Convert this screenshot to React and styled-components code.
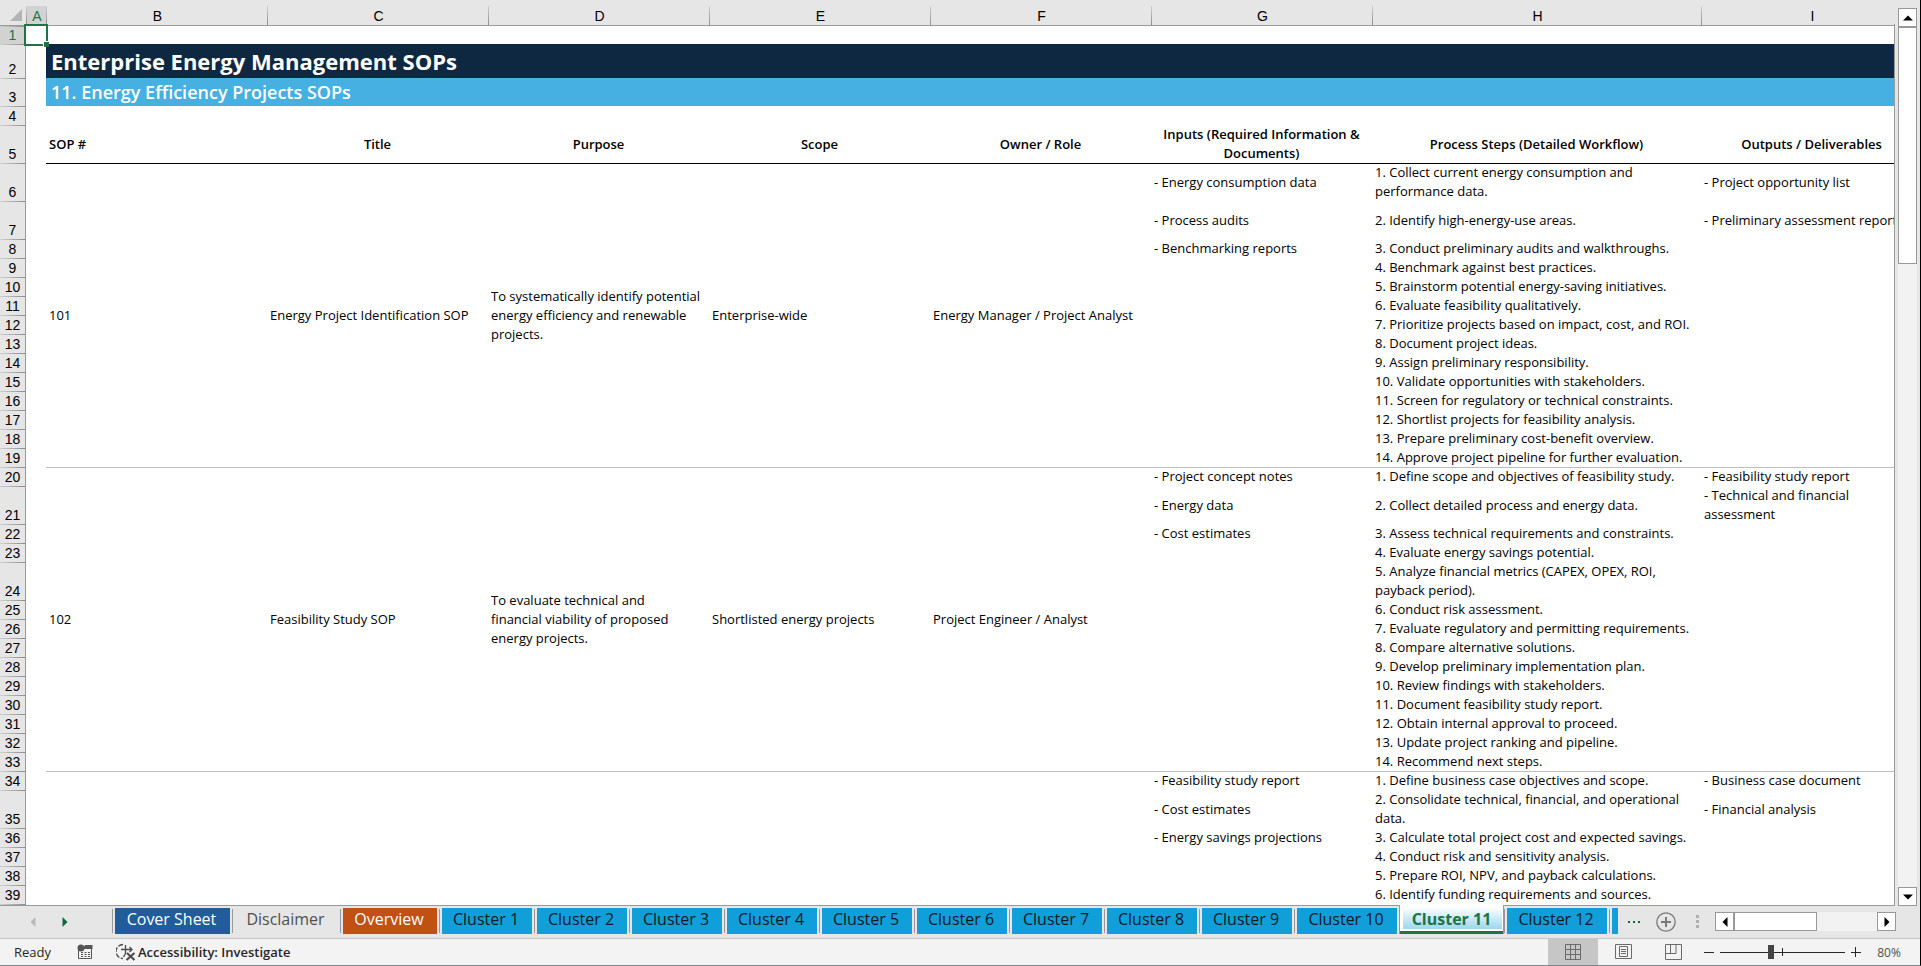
import React from 'react';
import styled, { createGlobalStyle, css } from 'styled-components';

const GlobalStyle = createGlobalStyle`
  *, *::before, *::after { box-sizing: border-box; }
  body { margin: 0; background: #e6e6e6; }
  button { border: 0; padding: 0; margin: 0; background: none; font: inherit; color: inherit; }
  svg { display: block; }
`;

const line = '#999999';
const chrome = '#e6e6e6';
const green = '#217346';
const narrow = "'Liberation Sans Narrow', 'Liberation Sans', sans-serif";
const sans = "'Open Sans', 'Noto Sans', sans-serif";

const AppWindow = styled.div`
  display: flex;
  flex-direction: column;
  height: 100vh;
  overflow: hidden;
  background: ${chrome};
  border-right: 1px solid #000;
  border-bottom: 1px solid #7d8590;
  font-family: ${sans};
  font-size: 13px;
  color: #000;
`;

const Workspace = styled.div`
  flex: 1;
  min-height: 0;
  display: flex;
`;

const SheetFrame = styled.main`
  flex: 1;
  min-width: 0;
  display: flex;
  border-bottom: 1px solid ${line};
`;

const SheetView = styled.div`
  flex: 1;
  min-width: 0;
  overflow: hidden;
  background: linear-gradient(${chrome} 25px, #fff 25px);
  border-right: 1px solid;
  border-image: linear-gradient(${chrome} 25px, ${line} 25px) 1;
`;

const Sheet = styled.table`
  table-layout: fixed;
  width: 0;
  border-collapse: separate;
  border-spacing: 0;
  line-height: 19px;
`;

const Col = styled.col`
  width: ${(p) => p.$w}px;
`;

const Row = styled.tr`
  height: ${(p) => p.$h}px;
`;

const Corner = styled.td`
  height: 26px;
  padding: 4px 0 0 10px;
  background: ${chrome};
  border-bottom: 1px solid ${line};
`;

const ColumnLetter = styled.th`
  height: 26px;
  padding: 8px 0 0 2px;
  font: 400 14px/17px ${narrow};
  color: ${(p) => (p.$selected ? green : '#000')};
  border-bottom: 1px solid ${line};
  background:
    linear-gradient(#d0d0d0, #8c8c8c) 0 6px / 1px 19px no-repeat,
    linear-gradient(${(p) => (p.$selected ? '#d2d2d2' : chrome)}, ${(p) => (p.$selected ? '#d2d2d2' : chrome)}) 0 6px / 100% 19px no-repeat,
    ${chrome};
`;

const RowNumber = styled.th`
  padding: 0;
  vertical-align: bottom;
  text-align: center;
  font: 400 14px/18px ${narrow};
  color: ${(p) => (p.$selected ? green : '#000')};
  border-right: 1px solid ${line};
  background:
    linear-gradient(to right, #d0d0d0, #8c8c8c) 0 0 / 100% 1px no-repeat,
    ${(p) => (p.$selected ? '#d2d2d2' : chrome)};
`;

const Cell = styled.td`
  padding: 0 3px;
  vertical-align: middle;
  white-space: pre;
  ${(p) => p.$rule && css`box-shadow: inset 0 1px ${p.$rule};`}
`;

const HeadCell = styled.th`
  padding: 0 3px;
  white-space: pre;
  font-weight: 600;
  text-align: ${(p) => p.$align || 'center'};
`;

const Banner = styled.td`
  padding: 0 5px;
  background: ${(p) => p.$bg};
  color: #fff;
  font-size: ${(p) => p.$size}px;
  font-weight: ${(p) => p.$weight};
  line-height: 26px;
`;

const ActiveCell = styled.td`
  position: relative;
  padding: 0;
`;

const Selection = styled.span`
  position: absolute;
  inset: -2px;
  z-index: 1;
  border: 2px solid ${green};

  &::after {
    content: '';
    position: absolute;
    right: -3px;
    bottom: -3px;
    width: 6px;
    height: 6px;
    background: ${green};
    border: solid #fff;
    border-width: 1px 0 0 1px;
  }
`;

const VScroll = styled.div`
  flex: 0 0 25px;
  display: flex;
  flex-direction: column;
  padding: 8px 3px 0;
`;

const ScrollButton = styled.button`
  flex: 0 0 19px;
  height: 19px;
  display: flex;
  align-items: center;
  justify-content: center;
  background: #fff;
  border: 1px solid ${line};
`;

const Track = styled.div`
  flex: 1;
  display: flex;
  flex-direction: ${(p) => (p.$vertical ? 'column' : 'row')};
  background: #f2f2f2;
`;

const Thumb = styled.div`
  flex: 0 0 ${(p) => p.$share};
  background: #fff;
  border: 1px solid ${line};
`;

const TabBar = styled.nav`
  flex: 0 0 32px;
  display: flex;
  align-items: flex-start;
  border-bottom: 1px solid #c6c6c6;
  font-size: 16px;
`;

const TabArrows = styled.div`
  flex: 0 0 112px;
  display: flex;
  gap: 24px;
  padding: 11px 0 0 28px;
`;

const ArrowButton = styled.button`
  width: 8px;
  height: 10px;
  color: ${(p) => p.$color};
`;

const TabSlot = styled.div`
  flex: none;
  padding: 2px 2px 0;
  background: linear-gradient(${line}, ${line}) 0 3px / 1px 24px no-repeat;
  border-left: 1px solid transparent;
  background-origin: border-box;
`;

const Tab = styled.button`
  display: block;
  width: ${(p) => p.$w}px;
  height: 26px;
  padding: 0 2px 4px 0;
  line-height: 22px;
  white-space: nowrap;
  background: ${(p) => p.$bg};
  color: ${(p) => p.$color};
`;

const ActiveTab = styled.button`
  position: relative;
  flex: none;
  width: 105px;
  height: 29px;
  margin-top: -1px;
  padding-bottom: 1px;
  line-height: 22px;
  font-weight: 700;
  color: ${green};
  background: linear-gradient(#fff 2px, #9bd7ee) 3px 0 / 99px 24px no-repeat, #fff;
  border: solid ${line};
  border-width: 0 1px;
  box-shadow: inset 0 -3px ${green};
`;

const More = styled.button`
  flex: none;
  width: 14px;
  margin-left: 8px;
  height: 32px;
  color: #0b6b3a;
`;

const AddSheet = styled.button`
  flex: none;
  margin: 6px 0 0 14px;
`;

const Grip = styled.div`
  flex: none;
  margin: 9px 16px 0 20px;
`;

const HScroll = styled.div`
  flex: 1;
  display: flex;
  height: 19px;
  margin: 6px 24px 0 0;
`;

const StatusBar = styled.footer`
  flex: 0 0 26px;
  display: flex;
  align-items: center;
  padding: 0 18px 0 14px;
  background: #f3f3f3;
  color: #262626;
`;

const StatusButton = styled.button`
  display: flex;
  align-items: center;
  gap: 2px;
  margin-left: ${(p) => p.$gap}px;
  font-weight: 600;
`;

const Spacer = styled.div`
  flex: 1;
`;

const ViewButton = styled.button`
  width: 50px;
  height: 26px;
  display: flex;
  align-items: center;
  justify-content: center;
  background: ${(p) => (p.$on ? '#c6c6c6' : 'transparent')};
`;

const ZoomStep = styled.button`
  width: 10px;
  margin: 0 6px;
`;

const ZoomRange = styled.input`
  appearance: none;
  width: 125px;
  height: 14px;
  margin: 0;
  background:
    linear-gradient(#262626, #262626) 50% 50% / 1px 8px no-repeat,
    linear-gradient(#262626, #262626) 0 50% / 100% 1px no-repeat;

  &::-webkit-slider-thumb {
    appearance: none;
    width: 6px;
    height: 14px;
    background: #444;
  }
`;

const ZoomValue = styled.button`
  width: 26px;
  margin-left: 9px;
  font-size: 12px;
  color: #505050;
`;

const inputs = {
  6: '- Energy consumption data',
  7: '- Process audits',
  8: '- Benchmarking reports',
  20: '- Project concept notes',
  21: '- Energy data',
  22: '- Cost estimates',
  34: '- Feasibility study report',
  35: '- Cost estimates',
  36: '- Energy savings projections',
};

const outputs = {
  6: '- Project opportunity list',
  7: '- Preliminary assessment report',
  20: '- Feasibility study report',
  21: '- Technical and financial\nassessment',
  34: '- Business case document',
  35: '- Financial analysis',
};

const sections = [
  {
    first: 6,
    rule: '#000',
    info: [
      '101',
      'Energy Project Identification SOP',
      'To systematically identify potential\nenergy efficiency and renewable\nprojects.',
      'Enterprise-wide',
      'Energy Manager / Project Analyst',
    ],
    steps: [
      '1. Collect current energy consumption and\nperformance data.',
      '2. Identify high-energy-use areas.',
      '3. Conduct preliminary audits and walkthroughs.',
      '4. Benchmark against best practices.',
      '5. Brainstorm potential energy-saving initiatives.',
      '6. Evaluate feasibility qualitatively.',
      '7. Prioritize projects based on impact, cost, and ROI.',
      '8. Document project ideas.',
      '9. Assign preliminary responsibility.',
      '10. Validate opportunities with stakeholders.',
      '11. Screen for regulatory or technical constraints.',
      '12. Shortlist projects for feasibility analysis.',
      '13. Prepare preliminary cost-benefit overview.',
      '14. Approve project pipeline for further evaluation.',
    ],
  },
  {
    first: 20,
    rule: '#bfbfbf',
    info: [
      '102',
      'Feasibility Study SOP',
      'To evaluate technical and\nfinancial viability of proposed\nenergy projects.',
      'Shortlisted energy projects',
      'Project Engineer / Analyst',
    ],
    steps: [
      '1. Define scope and objectives of feasibility study.',
      '2. Collect detailed process and energy data.',
      '3. Assess technical requirements and constraints.',
      '4. Evaluate energy savings potential.',
      '5. Analyze financial metrics (CAPEX, OPEX, ROI,\npayback period).',
      '6. Conduct risk assessment.',
      '7. Evaluate regulatory and permitting requirements.',
      '8. Compare alternative solutions.',
      '9. Develop preliminary implementation plan.',
      '10. Review findings with stakeholders.',
      '11. Document feasibility study report.',
      '12. Obtain internal approval to proceed.',
      '13. Update project ranking and pipeline.',
      '14. Recommend next steps.',
    ],
  },
  {
    first: 34,
    rule: '#bfbfbf',
    info: ['', '', '', '', ''],
    steps: [
      '1. Define business case objectives and scope.',
      '2. Consolidate technical, financial, and operational\ndata.',
      '3. Calculate total project cost and expected savings.',
      '4. Conduct risk and sensitivity analysis.',
      '5. Prepare ROI, NPV, and payback calculations.',
      '6. Identify funding requirements and sources.',
    ],
  },
];

const tallRows = [6, 7, 21, 24, 35];

const clusterBg = '#119fd9';
const tabsBefore = [
  { name: 'Cover Sheet', w: 115, bg: '#215c9b', color: '#fff' },
  { name: 'Disclaimer', w: 103, bg: 'transparent', color: '#505050' },
  { name: 'Overview', w: 94, bg: '#c05014', color: '#fff' },
  ...[1, 2, 3, 4, 5, 6, 7, 8, 9].map((n) => ({ name: `Cluster ${n}`, w: 90, bg: clusterBg, color: '#0b1a26' })),
  { name: 'Cluster 10', w: 100, bg: clusterBg, color: '#0b1a26' },
];
const tabsAfter = [
  { name: 'Cluster 12', w: 100, bg: clusterBg, color: '#0b1a26' },
  { name: '', w: 6, bg: clusterBg, color: '#0b1a26' },
];

const Triangle = ({ dir, size = 10 }) => {
  const d = {
    up: 'M0 7.5 5 2.5 10 7.5z',
    down: 'M0 2.5 5 7.5 10 2.5z',
    left: 'M7.5 0 2.5 5 7.5 10z',
    right: 'M2.5 0 7.5 5 2.5 10z',
  }[dir];
  return (
    <svg width={size} height={size} viewBox="0 0 10 10" fill="currentColor" aria-hidden="true">
      <path d={d} />
    </svg>
  );
};

const SheetTab = ({ tab }) => (
  <TabSlot>
    <Tab $w={tab.w} $bg={tab.bg} $color={tab.color} aria-label={tab.name || 'Next sheet'}>
      {tab.name}
    </Tab>
  </TabSlot>
);

const Section = ({ section }) =>
  section.steps.map((step, i) => {
    const n = section.first + i;
    const rule = i === 0 ? section.rule : undefined;
    return (
      <Row key={n} $h={tallRows.includes(n) ? 38 : 19}>
        <RowNumber scope="row">{n}</RowNumber>
        <Cell />
        {i === 0 &&
          section.info.map((text, c) => (
            <Cell key={c} rowSpan={section.steps.length} $rule={rule}>
              {text}
            </Cell>
          ))}
        <Cell $rule={rule}>{inputs[n]}</Cell>
        <Cell $rule={rule}>{step}</Cell>
        <Cell $rule={rule}>{outputs[n]}</Cell>
      </Row>
    );
  });

export default function App() {
  return (
    <AppWindow>
      <GlobalStyle />
      <Workspace>
        <SheetFrame>
          <SheetView>
            <Sheet>
              <colgroup>
                {[26, 20, 221, 221, 221, 221, 221, 221, 329, 221].map((w, i) => (
                  <Col key={i} $w={w} />
                ))}
              </colgroup>
              <thead>
                <tr>
                  <Corner>
                    <svg width="12" height="12" aria-hidden="true">
                      <path d="M12 0V12H0z" fill="#b4b4b4" />
                    </svg>
                  </Corner>
                  {'ABCDEFGHI'.split('').map((l) => (
                    <ColumnLetter key={l} scope="col" $selected={l === 'A'}>
                      {l}
                    </ColumnLetter>
                  ))}
                </tr>
              </thead>
              <tbody>
                <Row $h={18}>
                  <RowNumber scope="row" $selected>1</RowNumber>
                  <ActiveCell>
                    <Selection />
                  </ActiveCell>
                  <td colSpan={8} />
                </Row>
                <Row $h={34}>
                  <RowNumber scope="row">2</RowNumber>
                  <td />
                  <Banner colSpan={8} $bg="#0f2841" $size={22} $weight={700}>
                    Enterprise Energy Management SOPs
                  </Banner>
                </Row>
                <Row $h={28}>
                  <RowNumber scope="row">3</RowNumber>
                  <td />
                  <Banner colSpan={8} $bg="#45b0e1" $size={18} $weight={600}>
                    11. Energy Efficiency Projects SOPs
                  </Banner>
                </Row>
                <Row $h={19}>
                  <RowNumber scope="row">4</RowNumber>
                  <td colSpan={9} />
                </Row>
                <Row $h={38}>
                  <RowNumber scope="row">5</RowNumber>
                  <td />
                  <HeadCell $align="left">SOP #</HeadCell>
                  <HeadCell>Title</HeadCell>
                  <HeadCell>Purpose</HeadCell>
                  <HeadCell>Scope</HeadCell>
                  <HeadCell>Owner / Role</HeadCell>
                  <HeadCell>{'Inputs (Required Information &\nDocuments)'}</HeadCell>
                  <HeadCell>Process Steps (Detailed Workflow)</HeadCell>
                  <HeadCell>Outputs / Deliverables</HeadCell>
                </Row>
                {sections.map((s) => (
                  <Section key={s.first} section={s} />
                ))}
                <Row $h={19}>
                  <RowNumber />
                  <td colSpan={9} />
                </Row>
              </tbody>
            </Sheet>
          </SheetView>
        </SheetFrame>
        <VScroll>
          <ScrollButton aria-label="Scroll up"><Triangle dir="up" /></ScrollButton>
          <Track $vertical>
            <Thumb $share="27.5%" />
          </Track>
          <ScrollButton aria-label="Scroll down"><Triangle dir="down" /></ScrollButton>
        </VScroll>
      </Workspace>

      <TabBar aria-label="Sheets">
        <TabArrows>
          <ArrowButton $color="#b9b9b9" aria-label="Previous sheets"><Triangle dir="left" /></ArrowButton>
          <ArrowButton $color="#0b6b3a" aria-label="Next sheets"><Triangle dir="right" /></ArrowButton>
        </TabArrows>
        {tabsBefore.map((t) => (
          <SheetTab key={t.name} tab={t} />
        ))}
        <ActiveTab aria-current="page">Cluster 11</ActiveTab>
        {tabsAfter.map((t) => (
          <SheetTab key={t.name} tab={t} />
        ))}
        <More aria-label="More sheets">
          <svg width="13" height="3" fill="currentColor" aria-hidden="true">
            <path d="M0 0h2v2H0zM5 0h2v2H5zM10 0h2v2h-2z" />
          </svg>
        </More>
        <AddSheet aria-label="New sheet">
          <svg width="20" height="20" fill="none" stroke="#7a7a7a" aria-hidden="true">
            <circle cx="10" cy="10" r="9.2" strokeWidth="1.3" />
            <path d="M10 5v10M5 10h10" strokeWidth="2" />
          </svg>
        </AddSheet>
        <Grip>
          <svg width="3" height="13" fill="#b0b0b0" aria-hidden="true">
            <path d="M0 0h3v3H0zM0 5h3v3H0zM0 10h3v3H0z" />
          </svg>
        </Grip>
        <HScroll>
          <ScrollButton aria-label="Scroll left"><Triangle dir="left" /></ScrollButton>
          <Track>
            <Thumb $share="58%" />
          </Track>
          <ScrollButton aria-label="Scroll right"><Triangle dir="right" /></ScrollButton>
        </HScroll>
      </TabBar>

      <StatusBar>
        <span>Ready</span>
        <StatusButton $gap={26} aria-label="Record macro">
          <svg width="16" height="16" aria-hidden="true">
            <path d="M8 1h7.5v4H6z" fill="#555" />
            <path d="M1.5 6v8.5h13V4" fill="none" stroke="#555" />
            <circle cx="4" cy="4" r="3.5" fill="#555" />
            <path d="M4 8.500h2M7.500 8.500h2M11 8.500h2M4 10.500h2M7.500 10.500h2M11 10.500h2M4 12.500h2M7.500 12.500h2M11 12.500h2" stroke="#555" />
          </svg>
        </StatusButton>
        <StatusButton $gap={23}>
          <svg width="20" height="18" fill="none" stroke="#4a4a4a" aria-hidden="true">
            <path d="M7 1.500A7 7 0 0 0 7 15.500" strokeWidth="1.300" strokeDasharray="5 1.500" />
            <path d="M5 6.500h11M9.500 2v4.500M13.500 4l2.500 2.500-2.500 2.500M9.500 6.500v4l-2 3.500" strokeWidth="1.300" />
            <path d="M11 10l7.500 7M18.500 10l-8 7" strokeWidth="2" />
          </svg>
          Accessibility: Investigate
        </StatusButton>
        <Spacer />
        <ViewButton $on aria-label="Normal view">
          <svg width="16" height="16" fill="none" stroke="#6b6b6b" aria-hidden="true">
            <path d="M.5.5h15v15H.5zM5.500.5v15M10.500.5v15M.5 5.500h15M.5 10.500h15" />
          </svg>
        </ViewButton>
        <ViewButton aria-label="Page layout view">
          <svg width="17" height="16" fill="none" stroke="#6b6b6b" aria-hidden="true">
            <path d="M.5.5h16v14H.5zM4.500 2.500h8v10h-8zM6 5.500h5M6 7.500h5M6 9.500h5" />
          </svg>
        </ViewButton>
        <ViewButton aria-label="Page break preview">
          <svg width="17" height="16" fill="none" stroke="#6b6b6b" aria-hidden="true">
            <path d="M.5.5h16v15H.5zM.5 9.500h10.500v-9M5.500.5v9" />
          </svg>
        </ViewButton>
        <ZoomStep aria-label="Zoom out">
          <svg width="10" height="10" stroke="#262626" aria-hidden="true"><path d="M0 5.500h10" /></svg>
        </ZoomStep>
        <ZoomRange type="range" min="0" max="100" defaultValue="40" aria-label="Zoom" />
        <ZoomStep aria-label="Zoom in">
          <svg width="10" height="10" stroke="#262626" aria-hidden="true"><path d="M0 5.500h10M4.500 0v10" /></svg>
        </ZoomStep>
        <ZoomValue>80%</ZoomValue>
      </StatusBar>
    </AppWindow>
  );
}
